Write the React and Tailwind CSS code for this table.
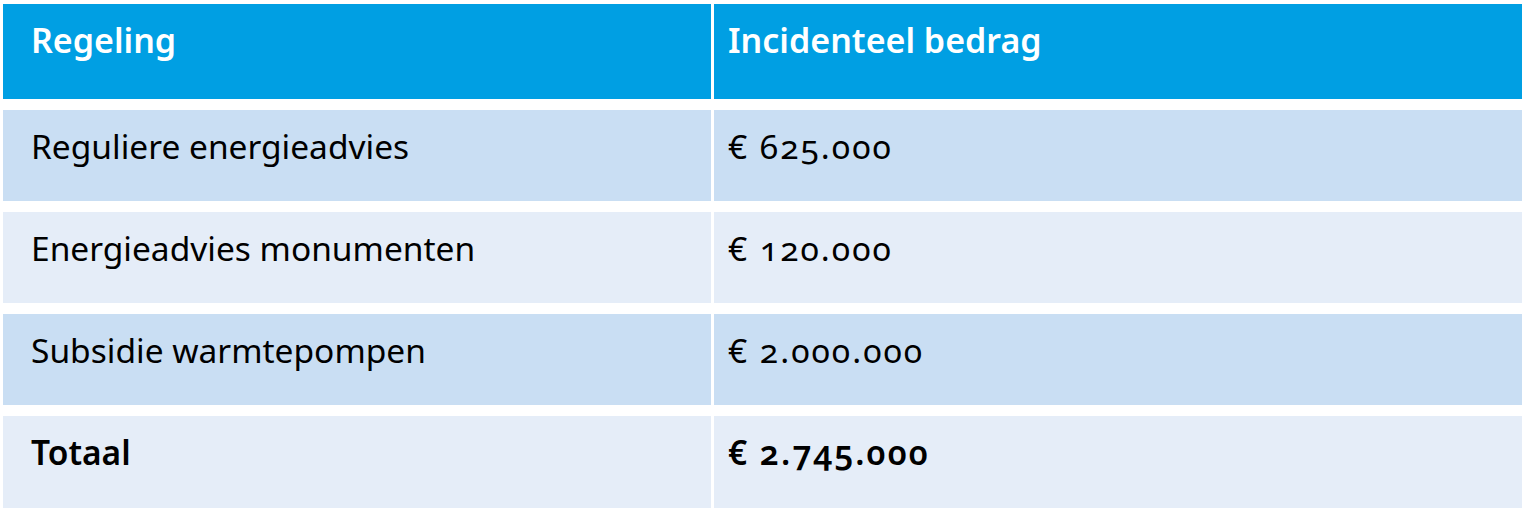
const rows = [
  { name: "Reguliere energieadvies", amount: "€ 625.000", bg: "bg-[#c9def3]" },
  { name: "Energieadvies monumenten", amount: "€ 120.000", bg: "bg-[#e5edf8]" },
  { name: "Subsidie warmtepompen", amount: "€ 2.000.000", bg: "bg-[#c9def3]" },
];

export default function App() {
  return (
    <div className="min-h-screen bg-white pt-[4px] pl-[3px] font-['Noto_Sans',sans-serif] text-black">
      <div className="grid grid-cols-[708px_808px] gap-x-[3px] gap-y-[11px]">
        <div className="h-[95px] bg-[#009fe3] pl-[28px] pt-[19px] text-[34px] leading-none font-semibold text-white">
          Regeling
        </div>
        <div className="h-[95px] bg-[#009fe3] pl-[14px] pt-[19px] text-[34px] leading-none font-semibold text-white">
          Incidenteel bedrag
        </div>

        {rows.map((row) => (
          <Row key={row.name} {...row} />
        ))}

        <div className="h-[92px] bg-[#e5edf8] pl-[28px] pt-[20px] text-[33.5px] leading-none font-semibold">
          Totaal
        </div>
        <div className="h-[92px] bg-[#e5edf8] pl-[14px] pt-[20px] text-[33.5px] leading-none font-semibold tracking-[2px] oldstyle-nums">
          € 2.745.000
        </div>
      </div>
    </div>
  );
}

function Row({ name, amount, bg }) {
  return (
    <>
      <div className={`h-[91px] ${bg} pl-[28px] pt-[20px] text-[33.5px] leading-none`}>
        {name}
      </div>
      <div className={`h-[91px] ${bg} pl-[14px] pt-[20px] text-[33.5px] leading-none tracking-[2px] oldstyle-nums`}>
        {amount}
      </div>
    </>
  );
}
